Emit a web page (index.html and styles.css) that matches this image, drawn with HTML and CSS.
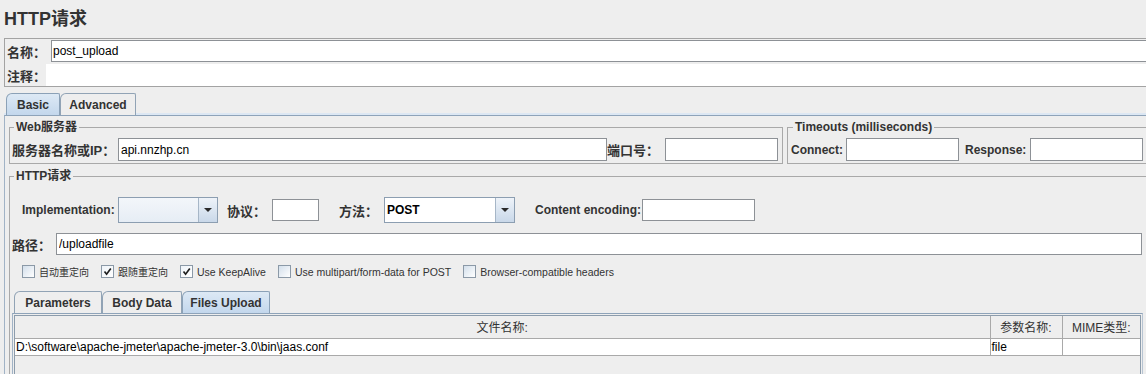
FILE: index.html
```html
<!DOCTYPE html>
<html lang="zh-CN">
<head>
    <meta charset="UTF-8">
    <title>HTTP请求</title>
    <link rel="stylesheet" href="styles.css">
</head>
<body>
<div class="page">
    <h1 class="title">HTTP请求</h1>

    <div class="name-panel">
        <div class="name-row">
            <label class="lbl cjk lbl-name">名称：</label>
            <input class="field field-name" value="post_upload">
        </div>
        <div class="name-row">
            <label class="lbl cjk lbl-comment">注释：</label>
            <div class="comment-area"></div>
        </div>
    </div>

    <div class="tabs main-tabs">
        <div class="tab tab-basic active">Basic</div>
        <div class="tab tab-advanced">Advanced</div>
    </div>

    <div class="tab-panel">
        <div class="server-row">
            <fieldset class="group group-web">
                <legend>Web服务器</legend>
                <div class="row">
                    <label class="lbl cjk lbl-server">服务器名称或IP：</label>
                    <input class="field field-server" value="api.nnzhp.cn">
                    <label class="lbl cjk lbl-port">端口号：</label>
                    <input class="field field-small">
                </div>
            </fieldset>
            <fieldset class="group group-timeouts">
                <legend>Timeouts (milliseconds)</legend>
                <div class="row">
                    <label class="lbl lbl-connect">Connect:</label>
                    <input class="field field-small">
                    <label class="lbl lbl-response">Response:</label>
                    <input class="field field-small">
                </div>
            </fieldset>
        </div>

        <fieldset class="group group-http">
            <legend>HTTP请求</legend>

            <div class="row impl-row">
                <label class="lbl lbl-impl">Implementation:</label>
                <div class="combo combo-impl">
                    <span class="combo-value"></span>
                    <span class="combo-btn"><i class="arrow"></i></span>
                </div>
                <label class="lbl cjk lbl-protocol">协议：</label>
                <input class="field field-protocol">
                <label class="lbl cjk lbl-method">方法：</label>
                <div class="combo combo-method">
                    <span class="combo-value">POST</span>
                    <span class="combo-btn"><i class="arrow"></i></span>
                </div>
                <label class="lbl lbl-encoding">Content encoding:</label>
                <input class="field field-small">
            </div>

            <div class="row path-row">
                <label class="lbl cjk lbl-path">路径：</label>
                <input class="field field-path" value="/uploadfile">
            </div>

            <div class="checks">
                <label class="check"><span class="box"></span><span class="cjk">自动重定向</span></label>
                <label class="check"><span class="box on"><svg viewBox="0 0 11 11"><path d="M2.5 5.5 L4.6 8.2 L8.8 2.6"/></svg></span><span class="cjk">跟随重定向</span></label>
                <label class="check"><span class="box on"><svg viewBox="0 0 11 11"><path d="M2.5 5.5 L4.6 8.2 L8.8 2.6"/></svg></span><span>Use KeepAlive</span></label>
                <label class="check"><span class="box"></span><span>Use multipart/form-data for POST</span></label>
                <label class="check"><span class="box"></span><span>Browser-compatible headers</span></label>
            </div>

            <div class="tabs sub-tabs">
                <div class="tab tab-params">Parameters</div>
                <div class="tab tab-body">Body Data</div>
                <div class="tab tab-files active">Files Upload</div>
            </div>

            <div class="sub-panel">
                <div class="table-wrap">
                    <table class="files">
                        <colgroup>
                            <col class="col-file">
                            <col class="col-param">
                            <col>
                        </colgroup>
                        <thead>
                            <tr><th>文件名称:</th><th>参数名称:</th><th>MIME类型:</th></tr>
                        </thead>
                        <tbody>
                            <tr><td>D:\software\apache-jmeter\apache-jmeter-3.0\bin\jaas.conf</td><td>file</td><td></td></tr>
                        </tbody>
                    </table>
                </div>
            </div>
        </fieldset>
    </div>
</div>
</body>
</html>
```

FILE: styles.css
```css
* {
    box-sizing: border-box;
}

body {
    margin: 0;
    background: #eeeeee;
    font-family: "Liberation Sans", "Noto Sans CJK SC", sans-serif;
    font-size: 12px;
    color: #333333;
    overflow: hidden;
}

.page {
    width: 1150px;
}

.title {
    margin: 0;
    height: 38px;
    padding: 8px 0 0 4px;
    font-size: 18px;
    line-height: 22px;
    font-weight: bold;
    color: #333333;
}

/* name / comment */
.name-panel {
    margin-left: 4px;
    height: 49px;
    padding: 1px 0 0 1px;
    border: 1px solid #a3a3a3;
}

.name-row {
    display: flex;
    align-items: center;
    height: 22px;
}

.name-row + .name-row {
    margin-top: 2px;
}

.lbl {
    flex: none;
    font-weight: bold;
    white-space: nowrap;
    color: #333333;
}

.lbl.cjk {
    font-size: 13px;
}

.lbl-name { width: 45px; padding-left: 1px; }
.lbl-comment { width: 40px; padding-left: 1px; }

.field {
    flex: none;
    height: 22px;
    margin: 0;
    padding: 0 2px;
    border: 1px solid #8d9196;
    background: #ffffff;
    font-family: inherit;
    font-size: 12px;
    color: #000000;
    outline: none;
}

.field-name {
    flex: 1;
    padding-left: 1px;
}

.comment-area {
    flex: 1;
    height: 22px;
    background: #ffffff;
}

/* tabs */
.tabs {
    display: flex;
    height: 22px;
}

.tab {
    display: flex;
    align-items: center;
    justify-content: center;
    border: 1px solid #91a3b5;
    border-bottom: none;
    border-radius: 6px 2px 0 0;
    background: #eeeeee;
    font-weight: bold;
    color: #333333;
}

.tab.active {
    background: linear-gradient(#dde9f5, #c3d7ec);
    border-color: #8ba1b7;
}

.main-tabs {
    margin: 6px 0 0 6px;
}

.tab-basic { width: 54px; }
.tab-advanced { width: 76px; }
.tab-params { width: 88px; }
.tab-body { width: 80px; }
.tab-files { width: 88px; }

.tab-panel {
    height: 259px;
    margin-left: 4px;
    padding: 4px 0 0 4px;
    border-top: 1px solid #8ea3b9;
    border-left: 1px solid #a1b3c6;
    box-shadow: 0 -2px 0 #dce7f3;
}

/* titled groups */
.group {
    min-width: 0;
    margin: 0;
    padding: 0 2px 2px;
    border: 1px solid #a9a9a9;
}

.group legend {
    margin-left: 2px;
    padding: 0 2px;
    font-weight: bold;
    font-size: 12px;
    line-height: 14px;
    color: #333333;
}

.row {
    display: flex;
    align-items: center;
}

.server-row {
    display: flex;
    gap: 4px;
}

.group-web {
    flex: none;
    width: 774px;
}

.group-timeouts {
    flex: 1;
}

.group-timeouts legend {
    margin-left: 3px;
}

.group-web .row,
.group-timeouts .row {
    height: 23px;
    margin-top: 4px;
}

.group-web .field,
.group-timeouts .field {
    height: 23px;
}

.lbl-server { width: 106px; }
.field-server { width: 489px; }
.lbl-port { width: 58px; }
.field-small { width: 113px; }
.lbl-connect { width: 56px; padding-left: 1px; }
.lbl-response { width: 71px; padding-left: 6px; }

/* http request group */
.group-http {
    height: 210px;
    margin-top: 5px;
}

.impl-row {
    height: 26px;
    margin-top: 14px;
    padding-left: 10px;
}

.lbl-impl { width: 96px; }
.lbl-protocol { width: 45px; margin-left: 9px; }
.field-protocol { width: 47px; }
.lbl-method { width: 45px; margin-left: 20px; }
.lbl-encoding { width: 107px; margin-left: 20px; }

.combo {
    flex: none;
    display: flex;
    height: 26px;
    border: 1px solid #8c9eb1;
}

.combo-impl { width: 100px; }
.combo-method { width: 131px; }

.combo-value {
    flex: 1;
    display: flex;
    align-items: center;
    padding-left: 2px;
    background: #ffffff;
    font-weight: bold;
    color: #000000;
}

.combo-impl .combo-value {
    background: linear-gradient(#f3f6fa, #e6edf5);
}

.combo-btn {
    flex: none;
    width: 19px;
    display: flex;
    align-items: center;
    justify-content: center;
    border-left: 1px solid #a6b6c7;
    background: linear-gradient(#eef3f9, #c9d8e9);
}

.arrow {
    width: 0;
    height: 0;
    border-left: 4px solid transparent;
    border-right: 4px solid transparent;
    border-top: 4px solid #2a2a2a;
}

.path-row {
    height: 22px;
    margin-top: 10px;
}

.lbl-path { width: 44px; }

.field-path {
    flex: 1;
    margin-right: 5px;
}

/* checkboxes */
.checks {
    display: flex;
    align-items: center;
    gap: 12px;
    height: 13px;
    margin-top: 10px;
    padding-left: 10px;
}

.check {
    display: flex;
    align-items: center;
    gap: 4px;
    font-size: 10.5px;
    color: #333333;
    white-space: nowrap;
}

.check .cjk {
    font-size: 10px;
}

.box {
    flex: none;
    width: 13px;
    height: 13px;
    border: 1px solid #8b99a7;
    background: linear-gradient(135deg, #d3dfeb, #ffffff);
}

.box.on {
    background: linear-gradient(135deg, #eef3f8, #ffffff);
}

.box svg {
    display: block;
    width: 11px;
    height: 11px;
}

.box path {
    fill: none;
    stroke: #1e1e1e;
    stroke-width: 1.7;
}

/* files upload */
.sub-tabs {
    margin: 13px 0 0 2px;
}

.sub-panel {
    height: 70px;
    margin-right: 4px;
    padding: 1px;
    border-top: 1px solid #8ea3b9;
    border-left: 1px solid #a1b3c6;
    border-right: 1px solid #b7c4d2;
}

.table-wrap {
    height: 66px;
    border: 1px solid #8c9cac;
    background: #eeeeee;
}

.files {
    width: 100%;
    border-collapse: collapse;
    table-layout: fixed;
}

.col-file { width: 975px; }
.col-param { width: 72px; }

.files th {
    height: 22px;
    padding: 0;
    border-right: 1px solid #a9a9a9;
    border-bottom: 1px solid #a9a9a9;
    font-weight: normal;
    font-size: 12px;
    color: #333333;
    text-align: center;
}

.files th:last-child,
.files td:last-child {
    border-right: none;
}

.files td {
    height: 17px;
    padding: 0 0 0 1px;
    border-right: 1px solid #a9a9a9;
    border-bottom: 1px solid #a9a9a9;
    background: #ffffff;
    font-size: 12px;
    color: #000000;
    white-space: nowrap;
    overflow: hidden;
}
```
